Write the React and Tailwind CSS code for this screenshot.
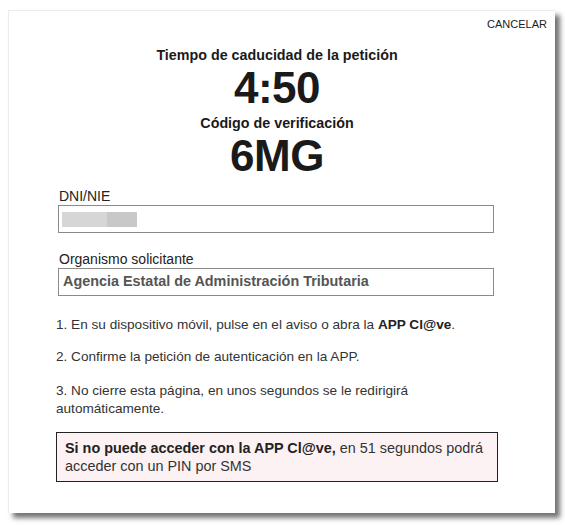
import React from "react";

const App = () => {
    return (
        <div className="w-[565px] h-[525px] bg-white pt-[10px] pl-[8px]" style={{ fontFamily: "'Liberation Sans', Arial, sans-serif" }}>
            <div className="w-[547px] h-[503px] bg-white border-t border-l border-[#ececec] shadow-[5px_5px_5px_rgba(0,0,0,0.55)]">
                <div className="flex justify-end pt-[7px] pr-[8px]">
                    <span className="text-[11px] text-[#222] leading-[13px]">CANCELAR</span>
                </div>

                <div className="ml-[47px] w-[442px]">
                    <div className="text-center text-[#1a1a1a] mt-[15px]">
                        <div className="text-[14.3px] font-bold leading-[18px]">Tiempo de caducidad de la petición</div>
                        <div className="text-[44px] font-bold leading-[48px] tracking-[-0.5px]">4:50</div>
                        <div className="text-[14.3px] font-bold leading-[18px] mt-[2px]">Código de verificación</div>
                        <div className="text-[44px] font-bold leading-[48px] tracking-[-0.5px]">6MG</div>
                    </div>

                    <div className="mt-[8px] pl-[2px] pr-[4px]">
                        <div className="text-[14px] text-[#222] leading-[17px] pl-[1px]">DNI/NIE</div>
                        <div className="h-[28px] border border-[#8a8a8a] flex items-center px-[3px]">
                            <div className="flex h-[15px]">
                                <div className="w-[45px] bg-[#d6d6d6]"></div>
                                <div className="w-[30px] bg-[#c8c8c8]"></div>
                            </div>
                        </div>

                        <div className="text-[14px] text-[#222] leading-[17px] mt-[18px] pl-[1px]">Organismo solicitante</div>
                        <div className="h-[28px] border border-[#8a8a8a] flex items-center px-[4px]">
                            <span className="text-[14.4px] font-bold text-[#555]">Agencia Estatal de Administración Tributaria</span>
                        </div>
                    </div>

                    <div className="mt-[20px] text-[13.6px] text-[#333] leading-[18px]">
                        <p>1. En su dispositivo móvil, pulse en el aviso o abra la <b className="text-[#222]">APP Cl@ve</b>.</p>
                        <p className="mt-[14px]">2. Confirme la petición de autenticación en la APP.</p>
                        <p className="mt-[16px]">3. No cierre esta página, en unos segundos se le redirigirá automáticamente.</p>
                    </div>

                    <div className="mt-[14px] border border-[#222] bg-[#fdf2f3] px-[8px] py-[6px] text-[14.4px] text-[#333] leading-[18px]">
                        <b className="text-[#222]">Si no puede acceder con la APP Cl@ve,</b> en 51 segundos podrá acceder con un PIN por SMS
                    </div>
                </div>
            </div>
        </div>
    );
};

export default App;
